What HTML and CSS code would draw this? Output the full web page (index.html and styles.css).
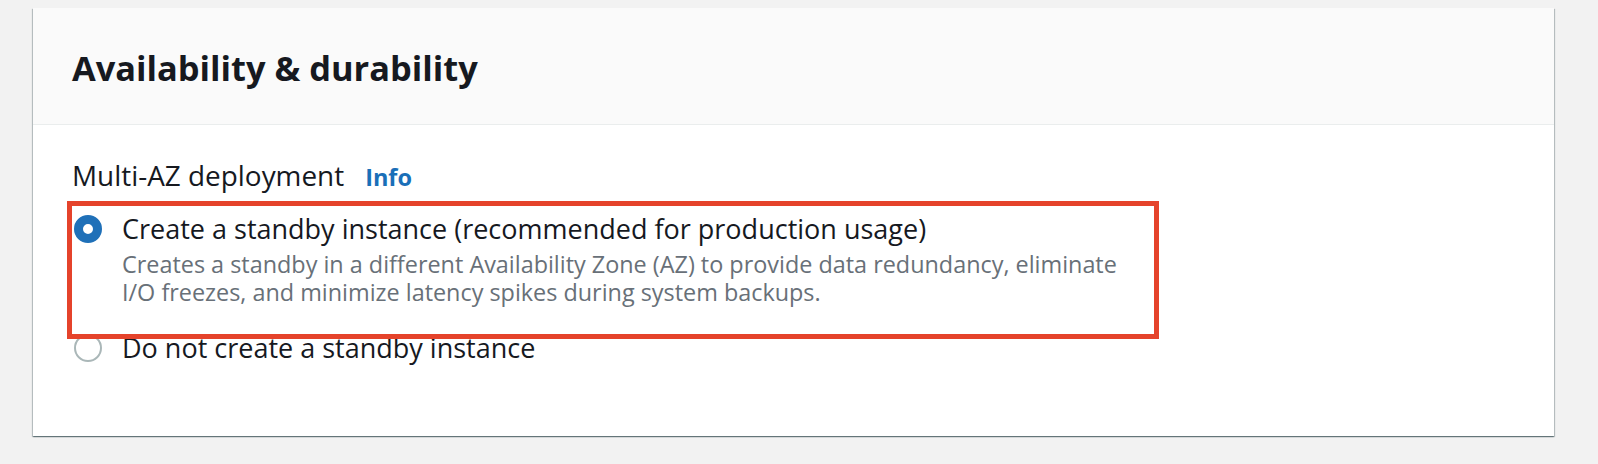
FILE: index.html
```html
<!DOCTYPE html>
<html lang="en">
<head>
<meta charset="utf-8">
<title>Availability &amp; durability</title>
<link rel="stylesheet" href="styles.css">
</head>
<body>
<section class="card">
  <header class="card-header">
    <h2 class="card-title">Availability &amp; durability</h2>
  </header>
  <div class="card-body">
    <div class="field-label">
      <span class="label-text">Multi-AZ deployment</span>
      <a class="info-link" href="#">Info</a>
    </div>
    <div class="radio-group">
      <div class="highlight"></div>
      <label class="radio-option">
        <span class="radio checked"></span>
        <span class="option-text">
          <span class="option-label">Create a standby instance (recommended for production usage)</span>
          <span class="option-desc">
            <span class="desc-line">Creates a standby in a different Availability Zone (AZ) to provide data redundancy, eliminate</span>
            <span class="desc-line">I/O freezes, and minimize latency spikes during system backups.</span>
          </span>
        </span>
      </label>
      <label class="radio-option second">
        <span class="radio"></span>
        <span class="option-text">
          <span class="option-label">Do not create a standby instance</span>
        </span>
      </label>
    </div>
  </div>
</section>
</body>
</html>
```
FILE: styles.css
```css
html, body {
  margin: 0;
  padding: 0;
}
body {
  background: #f2f2f2;
  font-family: "Open Sans", "Noto Sans", sans-serif;
  color: #16191f;
  width: 1598px;
  height: 464px;
  overflow: hidden;
}
.card {
  margin: 8px 0 0 33px;
  width: 1521px;
  height: 428px;
  background: #ffffff;
  box-shadow: 0 1px 1px 0 rgba(0, 28, 36, 0.35), 1px 1px 1px 0 rgba(0, 28, 36, 0.2), -1px 1px 1px 0 rgba(0, 28, 36, 0.2);
}
.card-header {
  height: 116px;
  background: #fafafa;
  border-bottom: 1px solid #eaeded;
  padding: 0 39px;
  display: flex;
  align-items: flex-start;
}
.card-title {
  margin: 40px 0 0 0;
  font-size: 34.4px;
  line-height: 40px;
  font-weight: 700;
  letter-spacing: 0;
}
.card-body {
  padding: 33px 39px 0 39px;
}
.field-label {
  display: flex;
  align-items: baseline;
  gap: 21px;
  font-size: 27.9px;
  line-height: 34px;
}
.info-link {
  color: #1a6fb8;
  font-weight: 700;
  font-size: 23.5px;
  text-decoration: none;
}
.radio-group {
  position: relative;
  margin-top: 18px;
}
.highlight {
  position: absolute;
  left: -5px;
  top: -11px;
  width: 1082px;
  height: 128px;
  border: 5px solid #e5432b;
  pointer-events: none;
}
.radio-option {
  display: flex;
  align-items: flex-start;
  gap: 20px;
}
.radio-option.second {
  margin-top: 25px;
}
.radio {
  box-sizing: border-box;
  width: 28px;
  height: 28px;
  border-radius: 50%;
  border: 2px solid #aab7b8;
  background: #fff;
  margin-left: 2px;
  margin-top: 3px;
  flex: none;
}
.radio.checked {
  border: 9px solid #1f70b8;
}
.option-text {
  display: flex;
  flex-direction: column;
}
.option-label {
  font-size: 27px;
  line-height: 34px;
}
.option-desc {
  margin-top: 4px;
  display: flex;
  flex-direction: column;
  font-size: 23.4px;
  line-height: 28px;
  color: #687078;
}
.desc-line {
  display: block;
}
```
